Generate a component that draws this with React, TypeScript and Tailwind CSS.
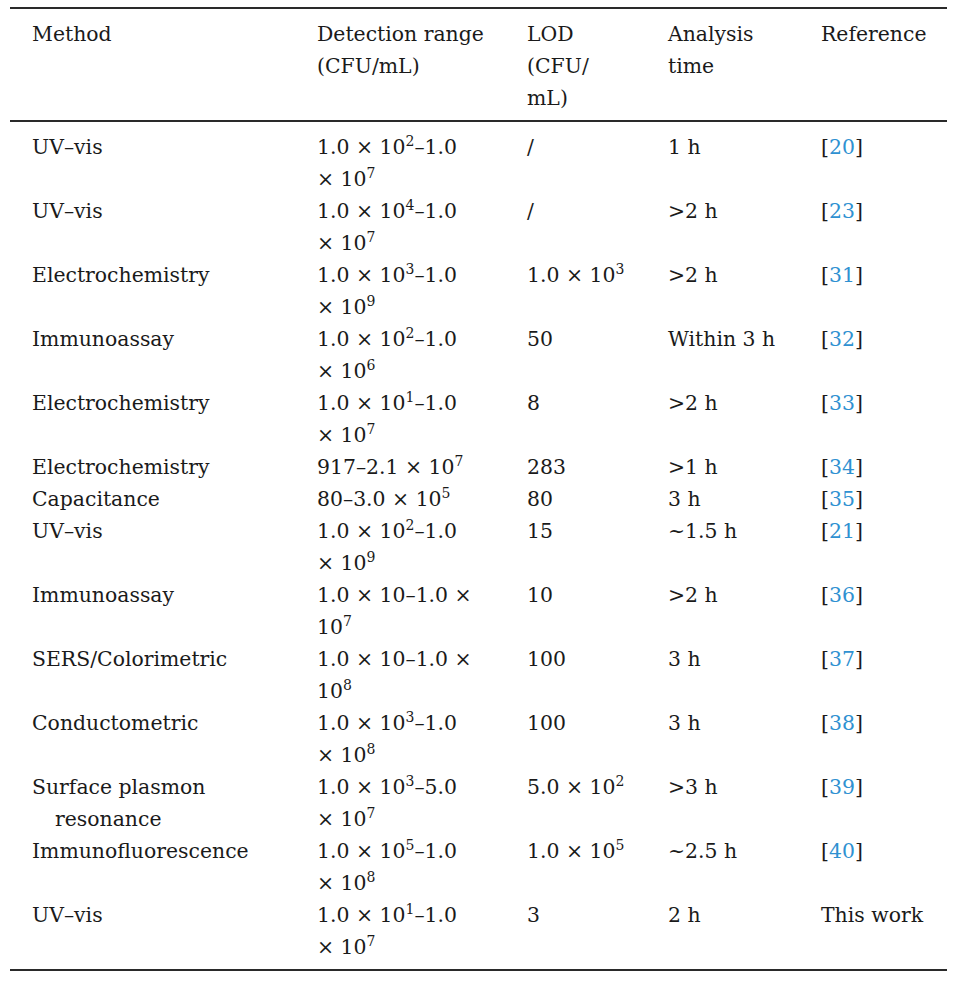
import React from 'react';

type Row = {
  method: React.ReactNode;
  range: React.ReactNode[];
  lod: React.ReactNode;
  time: string;
  ref: string;
};

const X = '\u00d7';

const Pow: React.FC<{ base?: string; exp: string }> = ({ base = '10', exp }) => (
  <>
    {base}
    <sup className="text-[14px] top-[-0.55em]">{exp}</sup>
  </>
);

const rows: Row[] = [
  { method: 'UV–vis', range: [<>1.0 {X} <Pow exp="2" />–1.0</>, <>{X} <Pow exp="7" /></>], lod: '/', time: '1 h', ref: '20' },
  { method: 'UV–vis', range: [<>1.0 {X} <Pow exp="4" />–1.0</>, <>{X} <Pow exp="7" /></>], lod: '/', time: '>2 h', ref: '23' },
  { method: 'Electrochemistry', range: [<>1.0 {X} <Pow exp="3" />–1.0</>, <>{X} <Pow exp="9" /></>], lod: <>1.0 {X} <Pow exp="3" /></>, time: '>2 h', ref: '31' },
  { method: 'Immunoassay', range: [<>1.0 {X} <Pow exp="2" />–1.0</>, <>{X} <Pow exp="6" /></>], lod: '50', time: 'Within 3 h', ref: '32' },
  { method: 'Electrochemistry', range: [<>1.0 {X} <Pow exp="1" />–1.0</>, <>{X} <Pow exp="7" /></>], lod: '8', time: '>2 h', ref: '33' },
  { method: 'Electrochemistry', range: [<>917–2.1 {X} <Pow exp="7" /></>], lod: '283', time: '>1 h', ref: '34' },
  { method: 'Capacitance', range: [<>80–3.0 {X} <Pow exp="5" /></>], lod: '80', time: '3 h', ref: '35' },
  { method: 'UV–vis', range: [<>1.0 {X} <Pow exp="2" />–1.0</>, <>{X} <Pow exp="9" /></>], lod: '15', time: '~1.5 h', ref: '21' },
  { method: 'Immunoassay', range: [<>1.0 {X} 10–1.0 {X}</>, <Pow exp="7" />], lod: '10', time: '>2 h', ref: '36' },
  { method: 'SERS/Colorimetric', range: [<>1.0 {X} 10–1.0 {X}</>, <Pow exp="8" />], lod: '100', time: '3 h', ref: '37' },
  { method: 'Conductometric', range: [<>1.0 {X} <Pow exp="3" />–1.0</>, <>{X} <Pow exp="8" /></>], lod: '100', time: '3 h', ref: '38' },
  {
    method: (
      <>
        <div>Surface plasmon</div>
        <div className="pl-[23px]">resonance</div>
      </>
    ),
    range: [<>1.0 {X} <Pow exp="3" />–5.0</>, <>{X} <Pow exp="7" /></>],
    lod: <>5.0 {X} <Pow exp="2" /></>,
    time: '>3 h',
    ref: '39',
  },
  { method: 'Immunofluorescence', range: [<>1.0 {X} <Pow exp="5" />–1.0</>, <>{X} <Pow exp="8" /></>], lod: <>1.0 {X} <Pow exp="5" /></>, time: '~2.5 h', ref: '40' },
  { method: 'UV–vis', range: [<>1.0 {X} <Pow exp="1" />–1.0</>, <>{X} <Pow exp="7" /></>], lod: '3', time: '2 h', ref: 'This work' },
];

const cols = 'grid grid-cols-[285px_210px_141px_153px_1fr] pl-[22px]';

export default function App() {
  return (
    <div className="min-h-screen bg-white pt-[7px] pl-[10px] font-['DejaVu_Serif',serif] text-[20.4px] leading-[32px] text-[#1a1a1a]">
      <div className="w-[937px]">
        <div className="border-t-2 border-b-2 border-[#2a2a2a] pt-[9px] pb-[6px]">
          <div className={cols}>
            <div>Method</div>
            <div>
              <div>Detection range</div>
              <div>(CFU/mL)</div>
            </div>
            <div>
              <div>LOD</div>
              <div>(CFU/</div>
              <div>mL)</div>
            </div>
            <div>
              <div>Analysis</div>
              <div>time</div>
            </div>
            <div>Reference</div>
          </div>
        </div>
        <div className="border-b-2 border-[#2a2a2a] pt-[9px] pb-[6px]">
          {rows.map((r, i) => (
            <div key={i} className={cols}>
              <div>{r.method}</div>
              <div>
                {r.range.map((line, j) => (
                  <div key={j}>{line}</div>
                ))}
              </div>
              <div>{r.lod}</div>
              <div>{r.time}</div>
              <div>
                {r.ref === 'This work' ? (
                  'This work'
                ) : (
                  <>
                    [<span className="text-[#2f91d1]">{r.ref}</span>]
                  </>
                )}
              </div>
            </div>
          ))}
        </div>
      </div>
    </div>
  );
}
